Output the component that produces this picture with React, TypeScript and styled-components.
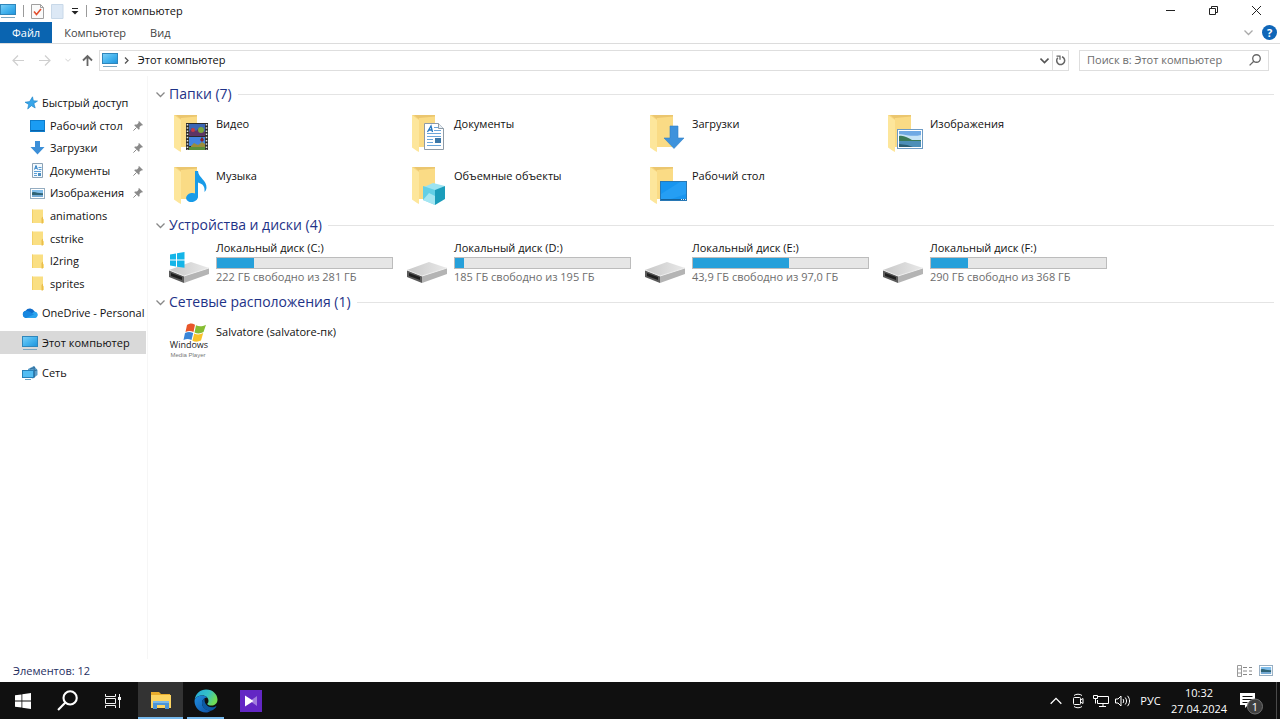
import React from "react";
import styled, { createGlobalStyle, css } from "styled-components";

const GlobalStyle = createGlobalStyle`
  *, *::before, *::after { box-sizing: border-box; }
  html, body { margin: 0; padding: 0; background: #fff; }
  body, button, input {
    font-family: "Open Sans", "Noto Sans", sans-serif;
    font-size: 11px;
    line-height: 16px;
    color: #111;
  }
  button { margin: 0; padding: 0; border: 0; background: none; cursor: default; }
  ul { margin: 0; padding: 0; list-style: none; }
  svg { display: block; flex: none; }
`;

const Shell = styled.div`
  display: flex;
  flex-direction: column;
  min-height: 100vh;
`;

/* ---------- title bar ---------- */

const TitleBar = styled.header`
  display: flex;
  align-items: center;
  height: 22px;
`;

const QuickTools = styled.div`
  display: flex;
  align-items: center;
  gap: 7px;
  padding-right: 8px;
`;

const Separator = styled.span`
  width: 1px;
  height: 12px;
  background: #9a9a9a;
`;

const IconButton = styled.button<{ $w?: number }>`
  display: flex;
  align-items: center;
  justify-content: center;
  width: ${(p) => (p.$w ? `${p.$w}px` : "auto")};
`;

const WindowTitle = styled.h1`
  flex: 1;
  margin: 0;
  font-size: 11px;
  font-weight: 400;
`;

const WindowControls = styled.div`
  display: flex;
  padding-right: 2px;
`;

/* ---------- ribbon ---------- */

const Ribbon = styled.nav`
  display: flex;
  align-items: stretch;
  height: 22px;
  border-bottom: 1px solid #dcdcdc;
`;

const Tab = styled.button<{ $primary?: boolean }>`
  padding: 0 12px;
  color: #444;
  ${(p) =>
    p.$primary &&
    css`
      color: #fff;
      background: #0a64b0;
    `}
`;

const RibbonTools = styled.div`
  display: flex;
  align-items: center;
  gap: 9px;
  margin-left: auto;
  padding-right: 3px;
`;

/* ---------- address row ---------- */

const AddressRow = styled.div`
  display: flex;
  align-items: center;
  height: 32px;
  padding: 0 11px 0 5px;
`;

const NavButtons = styled.div`
  display: flex;
  align-items: center;
  width: 94px;
`;

const AddressBox = styled.div`
  display: flex;
  flex: 1;
  align-items: center;
  height: 21px;
  margin-right: 10px;
  border: 1px solid #dedede;
`;

const Crumb = styled.button`
  display: flex;
  flex: 1;
  align-items: center;
  gap: 6px;
  padding-left: 2px;
  text-align: left;
`;

const RefreshButton = styled.button`
  display: flex;
  align-items: center;
  justify-content: center;
  width: 16px;
  height: 19px;
  border-left: 1px solid #dedede;
`;

const SearchBox = styled.label`
  display: flex;
  align-items: center;
  width: 190px;
  height: 21px;
  padding: 0 7px;
  border: 1px solid #dedede;

  input {
    flex: 1;
    min-width: 0;
    padding: 0;
    border: 0;
    outline: 0;
    background: none;
  }
  input::placeholder { color: #6c6c6c; opacity: 1; }
`;

/* ---------- body ---------- */

const Body = styled.div`
  display: flex;
  flex: 1;
`;

const Sidebar = styled.nav`
  width: 148px;
  padding: 16px 1px 0 0;
  border-right: 1px solid #f6f6f6;
`;

const QuickList = styled.ul`
  display: grid;
  grid-template-rows: repeat(9, minmax(0, 1fr));
  height: 203px;
  margin-bottom: 6px;
`;

const PlaceItem = styled.li`
  height: 23px;
  margin-bottom: 7px;
`;

const NavItem = styled.button<{ $nested?: boolean; $active?: boolean }>`
  display: grid;
  grid-template-columns: 16px 1fr 10px;
  gap: 4px;
  align-items: center;
  width: 100%;
  height: 100%;
  padding: 0 3px 0 ${(p) => (p.$nested ? 30 : 22)}px;
  text-align: left;
  white-space: nowrap;
  background: ${(p) => (p.$active ? "#d9d9d9" : "transparent")};
`;

const Content = styled.main`
  flex: 1;
  min-width: 0;
  padding: 8px 6px 0 8px;
`;

const Group = styled.section`
  margin-bottom: 4px;
`;

const GroupHeader = styled.h2`
  display: flex;
  align-items: center;
  gap: 4px;
  height: 20px;
  margin: 0;
  color: #1e3287;
  font-size: 14px;
  font-weight: 400;
  line-height: 20px;

  &::after {
    content: "";
    flex: 1;
    height: 1px;
    margin-left: 2px;
    background: #e4e4e4;
  }
`;

const Tiles = styled.ul`
  display: grid;
  grid-template-columns: repeat(auto-fill, 238px);
  padding: 3px 0 0 13px;
`;

const Tile = styled.button<{ $compact?: boolean }>`
  display: grid;
  grid-template-columns: 42px 177px;
  gap: 5px;
  align-items: start;
  width: 238px;
  height: ${(p) => (p.$compact ? 50 : 52)}px;
  padding-top: ${(p) => (p.$compact ? 1 : 5)}px;
  text-align: left;
`;

const TileName = styled.span`
  display: block;
  padding-top: 4px;
`;

const DriveInfo = styled.span`
  display: block;
`;

const DriveName = styled.span`
  display: block;
  line-height: 18px;
`;

const Capacity = styled.span`
  display: block;
  height: 12px;
  border: 1px solid #bcbcbc;
  background: #e6e6e6;
`;

const CapacityFill = styled.span`
  display: block;
  height: 100%;
  background: #26a0da;
`;

const DriveNote = styled.span`
  display: block;
  color: #6d6d6d;
`;

const StatusBar = styled.footer`
  display: flex;
  align-items: center;
  justify-content: space-between;
  height: 23px;
  padding: 0 7px 0 13px;
  color: #1f2f5f;
`;

const ViewModes = styled.div`
  display: flex;
  gap: 6px;
`;

/* ---------- taskbar ---------- */

const Taskbar = styled.div`
  display: flex;
  height: 37px;
  color: #fff;
  background: #101010;
`;

const TaskButton = styled.button<{ $active?: boolean; $running?: boolean }>`
  display: flex;
  align-items: center;
  justify-content: center;
  width: 45px;
  background: ${(p) => (p.$active ? "#333" : "transparent")};
  box-shadow: ${(p) => (p.$active ? "inset 0 -2px #76b9ed" : "none")};
  ${(p) =>
    p.$running &&
    css`
      background: linear-gradient(#76b9ed, #76b9ed) center bottom / 37px 2px no-repeat;
    `}
`;

const Apps = styled.div`
  display: flex;
  margin-left: 3px;
`;

const Tray = styled.div`
  display: flex;
  align-items: stretch;
  margin-left: auto;
  border-right: 1px solid #4a4a4a;
  margin-right: 3px;
`;

const TrayButton = styled.button<{ $w: number }>`
  display: flex;
  align-items: center;
  justify-content: center;
  width: ${(p) => p.$w}px;
  color: #fff;
`;

const Clock = styled.button`
  width: 64px;
  color: #fff;
  text-align: center;

  time { display: block; }
`;

/* ---------- icons ---------- */

const MonitorIcon = () => (
  <svg width="16" height="16" viewBox="0 0 16 16">
    <defs>
      <linearGradient id="mon" x1="0" y1="0" x2="1" y2="1">
        <stop offset="0" stopColor="#7fd0f7" />
        <stop offset=".5" stopColor="#45b4ee" />
        <stop offset="1" stopColor="#1d93dc" />
      </linearGradient>
    </defs>
    <rect x=".5" y="1.500" width="15" height="10" fill="url(#mon)" stroke="#2f86bb" />
    <path d="M1 14.500h14" stroke="#7ca6c0" fill="none" />
  </svg>
);

const CheckPageIcon = () => (
  <svg width="13" height="16" viewBox="0 0 13 16">
    <path d="M.5 1.500h9l3 3v11H.5z" fill="#fafafa" stroke="#a0a0a0" />
    <path d="M9.500 1.500v3h3" fill="none" stroke="#a0a0a0" />
    <path d="M3 8.500l2.500 3L10 6" fill="none" stroke="#e2502f" strokeWidth="1.600" />
  </svg>
);

const PageIcon = () => (
  <svg width="13" height="16" viewBox="0 0 13 16">
    <path d="M.5 1.500h11.500v14H.5z" fill="#dce8f5" stroke="#c8d8e8" />
  </svg>
);

const CustomizeIcon = () => (
  <svg width="8" height="8" viewBox="0 0 8 8">
    <path d="M1 1.500h6" stroke="#222" />
    <path d="M.5 4h7L4 7.500z" fill="#222" />
  </svg>
);

const Chevron = ({ color = "#777", size = 9, up = false, width = 1.3 }: { color?: string; size?: number; up?: boolean; width?: number }) => (
  <svg width={size} height={size} viewBox="0 0 9 9">
    <path d={up ? "M.5 6.500l4-4 4 4" : "M.5 2.500l4 4 4-4"} fill="none" stroke={color} strokeWidth={width} />
  </svg>
);

const ArrowIcon = ({ dir, color }: { dir: "left" | "right" | "up"; color: string }) => {
  const paths = {
    left: "M12 6.500H1M6 1.500l-5 5 5 5",
    right: "M0 6.500h11M6 1.500l5 5-5 5",
    up: "M6.500 12V2M2 6.500L6.500 2 11 6.500",
  };
  return (
    <svg width="13" height="13" viewBox="0 0 13 13">
      <path d={paths[dir]} fill="none" stroke={color} strokeWidth={dir === "up" ? 1.8 : 1.2} />
    </svg>
  );
};

const StarIcon = () => (
  <svg width="16" height="14" viewBox="-2 0 16 14">
    <path d="M8.500.8l.9 4 4.100.2-3.600 2.600 1.300 4.400-3.800-2.300L3.700 13l1-4.600L1 6.200l4.600-.6z" fill="#38a6ea" stroke="#1a7fc4" strokeWidth=".6" />
  </svg>
);

const DesktopIcon = () => (
  <svg width="16" height="14" viewBox="0 0 16 14">
    <rect x=".5" y="1.500" width="14" height="11" fill="#1a9cf3" stroke="#0d7ccb" />
    <path d="M1 11.500h13" stroke="#0a62a8" />
  </svg>
);

const DownIcon = () => (
  <svg width="15" height="14" viewBox="0 0 15 14">
    <path d="M5 0h5v6h4.500L7.500 13.500.5 6H5z" fill="#3c8fd8" />
  </svg>
);

const DocIcon = () => (
  <svg width="15" height="16" viewBox="0 0 15 16">
    <path d="M2.500.5h10v14h-10z" fill="#f3f9fd" stroke="#8ba2b5" />
    <path d="M4.500 6.500l1.500-4 1.500 4M5 5.200h2" fill="none" stroke="#2b7ec4" />
    <path d="M8.500 4.500h3M8.500 6.500h3M4 8.500h7M4 10.500h3M4 12.500h3" stroke="#5a9fd6" fill="none" />
    <rect x="8" y="10" width="3" height="3" fill="#4b8ec2" />
  </svg>
);

const PictureIcon = ({ w = 15, h = 11 }: { w?: number; h?: number }) => (
  <svg width={w} height={h} viewBox="0 0 15 11" preserveAspectRatio="none">
    <rect x=".5" y=".5" width="14" height="10" fill="#fff" stroke="#95adc1" />
    <rect x="2" y="2" width="11" height="4" fill="#7fbdea" />
    <path d="M2 4.500c3-1.500 5 1 11 .8v2H2z" fill="#2f6375" />
    <rect x="2" y="7" width="11" height="2" fill="#74a9d3" />
  </svg>
);

const SmallFolderIcon = () => (
  <svg width="15" height="15" viewBox="0 0 15 15">
    <path d="M2 .5h11v9l1 1v3.500H2z" fill="#fadf83" />
    <path d="M11.500 9l1.500-1.500v7H11.500z" fill="#e9bd4c" />
    <path d="M2 .5h1v13.500H2z" fill="#f3d068" />
  </svg>
);

const PinIcon = () => (
  <svg width="10" height="10" viewBox="0 0 10 10">
    <path d="M6 0l4 4-1 .6-.8-.2L6.500 6l.1 2-.8.8L1.200 4.200 2 3.400l2 .1L5.600 1.800 5.400.8z" fill="#8a8a8a" />
    <path d="M3.500 6.500L.4 9.600" stroke="#8a8a8a" />
  </svg>
);

const CloudIcon = () => (
  <svg width="16" height="12" viewBox="0 0 16 12">
    <path d="M4 11a3.700 3.700 0 01-.4-7.200A5 5 0 0112.500 4.600 3.300 3.300 0 0112.700 11z" fill="#0f6cc9" />
    <path d="M3.500 11l8.500-6.200a3.200 3.200 0 013.700 3.800A3 3 0 0112.700 11z" fill="#2ba4ee" />
    <path d="M3.600 3.900c2-.3 3.600.4 8.400 3.700L4 11a3.600 3.600 0 01-.4-7.100z" fill="#1787df" />
  </svg>
);

const NetworkIcon = () => (
  <svg width="16" height="16" viewBox="0 0 16 16">
    <path d="M6 4l6-3 3.500 4v5L11 13.500 6 12z" fill="#5b9dc9" />
    <path d="M8 4l5-1.500M8 7l7-2M12 1.500l.5 11" stroke="#2f6f9d" fill="none" />
    <rect x=".5" y="5.500" width="11" height="7" fill="#52bdf3" stroke="#2680b8" />
    <path d="M3 14.500h6" stroke="#6aa2c4" />
  </svg>
);

type FolderKind = "video" | "docs" | "down" | "pics" | "music" | "cube" | "desk";

const overlays: Record<FolderKind, React.ReactNode> = {
  video: (
    <g>
      <rect x="16" y="9" width="22" height="27" fill="#2b2b2b" />
      <rect x="19" y="10" width="16" height="12" fill="#3c66b5" />
      <rect x="19" y="23" width="16" height="9" fill="#4384e0" />
      <rect x="19" y="33" width="16" height="3" fill="#5a8f3c" />
      <path d="M19 18l3-4 4 3 4-4 5 5v4H19z" fill="#5d3565" />
      <circle cx="31" cy="16" r="3" fill="#7aa53c" />
      <circle cx="23" cy="16" r="2" fill="#c23b45" />
      <path d="M32 23l2 3-2 2-2-2z" fill="#8a1f2b" />
      <path d="M21 32l3-3 4 2 4-3 3 2v3H21z" fill="#9a8d3b" />
      <path d="M17.500 10v26M36.500 10v26" stroke="#e5e5e5" strokeWidth="1.500" strokeDasharray="1.500 1.700" />
    </g>
  ),
  docs: (
    <g>
      <path d="M16.500 9.500h14l5 5v21h-19z" fill="#fff" stroke="#8d9aa6" />
      <path d="M30.500 9.500v5h5" fill="#e8eef4" stroke="#8d9aa6" />
      <path d="M19.500 18l3.500-6 1.500 6M20.500 16h3.500" fill="none" stroke="#2277c2" strokeWidth="1.300" />
      <path d="M26 13.500h4M26 16.500h7M19 19.500h14M19 22.500h14M19 25.500h6M19 28.500h6M19 31.500h14" stroke="#6aa6da" />
      <rect x="27" y="24" width="6" height="5" fill="#3c78a8" />
    </g>
  ),
  down: <path d="M24 12h8v12h6L28 34.500 18 24h6z" fill="#3e92dc" stroke="#2f7fc6" strokeWidth=".6" />,
  pics: (
    <g>
      <rect x="13.500" y="15.500" width="25" height="19" fill="#fff" stroke="#6d9bc4" />
      <rect x="15" y="17" width="22" height="16" fill="#6fa9e4" />
      <path d="M15 20c8 1 14 3 22 1v5H15z" fill="#c5e3f6" />
      <path d="M15 22c5-1 9 2 13 4h9v1.500H15z" fill="#3a7a58" />
      <rect x="15" y="27" width="22" height="6" fill="#4d8fb8" />
      <path d="M15 33v-3l8 1 6 2z" fill="#2c5f74" />
    </g>
  ),
  music: (
    <g fill="#189be8">
      <ellipse cx="22" cy="31.500" rx="6" ry="4.500" transform="rotate(-12 22 31.500)" />
      <path d="M25 5h3c.5 7 9 9 8.500 17-.3 2-1 3-2 4 .5-5-1-8-6.500-9.500v15h-3z" />
    </g>
  ),
  cube: (
    <g>
      <path d="M25 17l12 3-10 5-11-4z" fill="#9be3f2" />
      <path d="M15 20l12 4v15l-12-5z" fill="#62cfe6" />
      <path d="M27 24l10-4v13l-10 6z" fill="#1b9dbb" />
      <path d="M15 34l6-7 6 3v9z" fill="#c0eff7" opacity=".7" />
    </g>
  ),
  desk: (
    <g>
      <rect x="14.500" y="15.500" width="26" height="19" fill="#1795f0" stroke="#2878b5" />
      <path d="M15 28L34 16h6v12l-18 6h-7z" fill="#34a8f8" opacity=".5" />
      <path d="M15 33.500h25" stroke="#15639e" />
      <path d="M35 33.500h5" stroke="#d9ecfa" strokeDasharray="1 1" />
    </g>
  ),
};

const FolderIcon = ({ kind }: { kind: FolderKind }) => (
  <svg width="42" height="44" viewBox="-1 -2 42 44">
    <path d="M4 1h23v32H8z" fill="#f6d47d" />
    <path d="M6 1h21v3L11 5z" fill="#ebc66f" />
    <path d="M11 4l16-1.500V33H11z" fill="#fadb85" />
    <path d="M4 1l7 5v32L9 37 4 33.500z" fill="#fde69b" />
    {overlays[kind]}
  </svg>
);

const DriveIcon = ({ system }: { system?: boolean }) => (
  <svg width="42" height="47" viewBox="0 -7 42 47">
    <defs>
      <linearGradient id="driveTop" x1="0" y1="0" x2="1" y2="0">
        <stop offset="0" stopColor="#c8c8c8" />
        <stop offset="1" stopColor="#e9e9e9" />
      </linearGradient>
    </defs>
    <path d="M0 24l22-8 18 6-25 9z" fill="url(#driveTop)" />
    <path d="M0 24l15 6v7L0 31z" fill="#5a5a5a" />
    <path d="M2 27l11 4v3L2 30z" fill="#1f1f1f" />
    <path d="M15 30l25-8v6l-25 9z" fill="#b4b4b4" />
    <path d="M0 24l15 6 25-8" fill="none" stroke="#efefef" />
    {system && (
      <path d="M1 8.500l6-1v6H1zM8 7.300l7.500-1.200v7.400H8zM1 14.500h6v6l-6-1zM8 14.500h7.500v7.300L8 20.700z" fill="#14b5e8" />
    )}
  </svg>
);

const MediaPlayerIcon = () => (
  <svg width="42" height="40" viewBox="0 0 42 40">
    <path d="M18 5c3-2 5-2 8-.2L24.500 12c-3-1.500-5-1.500-8 0z" fill="#e8562a" />
    <path d="M27 5.200c3 1.600 6 1.600 10-.5L34.500 12c-3 1.800-6 1.800-9 .5z" fill="#86bd32" />
    <path d="M16 13c3-1.500 5-1.500 8.200 0l-1.700 7c-3-1.500-5-1.500-8 0z" fill="#3b86d8" />
    <path d="M25.200 13.500c3 1.400 6 1.300 9-.4L32 20.500c-3 1.500-6 1.500-8.600.2z" fill="#f8c22a" />
    <text x="20" y="28" textAnchor="middle" fontFamily="Open Sans, sans-serif" fontSize="9" fill="#222">Windows</text>
    <text x="19" y="37" textAnchor="middle" fontFamily="Liberation Sans, sans-serif" fontSize="6" fill="#777">Media Player</text>
  </svg>
);

const SearchIcon = ({ size, color, width }: { size: number; color: string; width: number }) => (
  <svg width={size} height={size} viewBox="0 0 20 20">
    <circle cx="12.500" cy="7.500" r="6.300" fill="none" stroke={color} strokeWidth={width} />
    <path d="M8 12l-7 7" stroke={color} strokeWidth={width} />
  </svg>
);

const StartIcon = () => (
  <svg width="16" height="16" viewBox="0 0 16 16">
    <path d="M0 2.300l6.500-.9v6.200H0zM7.300 1.300L16 0v7.600H7.300zM0 8.400h6.500v6.200L0 13.700zM7.300 8.400H16V16l-8.700-1.200z" fill="#fff" />
  </svg>
);

const TaskViewIcon = () => (
  <svg width="16" height="16" viewBox="0 0 16 16">
    <path d="M.5 1v2.500h10V1M.5 15v-2.500h10V15M.5 5.500h10v5H.5z" fill="none" stroke="#f2f2f2" />
    <path d="M14.500 1v14" stroke="#f2f2f2" />
    <rect x="13" y="4" width="3" height="3" fill="#f2f2f2" />
  </svg>
);

const ExplorerIcon = () => (
  <svg width="22" height="20" viewBox="0 0 22 20">
    <path d="M1 1h8l2 2h9v14H1z" fill="#e9ac2c" />
    <path d="M1 4h20v13H1z" fill="#fcd462" />
    <path d="M3 10h16v8h-4v-4H7v4H3z" fill="#4b94d6" />
    <path d="M3 10h16v2H3z" fill="#7ab9e9" />
  </svg>
);

const EdgeIcon = () => (
  <svg width="24" height="24" viewBox="0 0 24 24">
    <defs>
      <linearGradient id="edgeTop" x1="0" y1="0" x2="1" y2=".4">
        <stop offset="0" stopColor="#23a8dc" />
        <stop offset=".6" stopColor="#35c1c6" />
        <stop offset="1" stopColor="#6fdc55" />
      </linearGradient>
      <linearGradient id="edgeLow" x1="0" y1="0" x2="1" y2="1">
        <stop offset="0" stopColor="#1f8ee0" />
        <stop offset="1" stopColor="#0f4fa3" />
      </linearGradient>
    </defs>
    <path d="M.6 11C1.500 4.500 6.500.5 12 .5c7 0 11.500 5 11.500 10 0 4-3 6-6 6-2.500 0-4.200-.8-4.200-1.600 0-.6 1.200-1.200 1.200-3C14.500 9 12 6.500 8.500 6.500 4.500 6.500 1.500 8.500.6 11z" fill="url(#edgeTop)" />
    <path d="M.5 12c0-3 3.500-5.500 8-5.500 2 0 3.700.8 4.700 2C9.500 9 8 11.500 8 14c0 5 5 8 9.500 7.200C15.500 23 13.500 23.500 12 23.500 5 23.500.5 18 .5 12z" fill="url(#edgeLow)" />
    <path d="M8 14c0-2 .8-3.800 2.600-4.800-.6 4.300 1.900 9 7.400 9 1.700 0 3-.5 4-1 .4-.2.700.1.500.4-1 1.800-2.700 3.200-4.600 3.800C12.500 22.300 8 19 8 14z" fill="#0c59a4" />
  </svg>
);

const PlayerIcon = () => (
  <svg width="22" height="22" viewBox="0 0 22 22">
    <rect width="22" height="22" fill="#6327c4" />
    <path d="M17 6v10l-7-5z" fill="#b79be6" opacity=".75" />
    <path d="M5 5.500L13.500 11 5 16.500z" fill="#fff" />
  </svg>
);

const RecordIcon = () => (
  <svg width="12" height="16" viewBox="0 0 12 16">
    <path d="M2 2.500C4 .8 8 .8 10 2.500M2 13.500c2 1.700 6 1.700 8 0" fill="none" stroke="#fff" />
    <rect x="1.500" y="4.500" width="7" height="7" rx="1" fill="none" stroke="#fff" />
    <path d="M8.500 7l2.500-1.500v5L8.500 9" fill="none" stroke="#fff" />
  </svg>
);

const EthernetIcon = () => (
  <svg width="16" height="14" viewBox="0 0 16 14">
    <path d="M5 2.500h10.500v7H4.500V6M10 9.500v3M6 12.500h7" fill="none" stroke="#fff" />
    <path d="M.5 1.500h4v3h-4zM2.500 4.500v5" fill="none" stroke="#fff" />
  </svg>
);

const SpeakerIcon = () => (
  <svg width="16" height="14" viewBox="0 0 16 14">
    <path d="M.5 5h2.500l3-3v10L3 9H.5z" fill="none" stroke="#fff" />
    <path d="M8 5c.9 1.200.9 2.800 0 4M10.200 3.500c1.800 2 1.800 5 0 7M12.500 1.800c2.700 3 2.700 7.400 0 10.400" fill="none" stroke="#fff" />
  </svg>
);

const NoticeIcon = () => (
  <svg width="30" height="28" viewBox="0 0 30 28">
    <path d="M1 6h15v12H9l-3 3v-3H1z" fill="#fff" />
    <path d="M3.500 9.500h10M3.500 12.500h10M3.500 15.500h5" stroke="#101010" />
    <circle cx="16" cy="19.500" r="7.500" fill="#3f3f3f" stroke="#707070" />
    <text x="16" y="23.500" textAnchor="middle" fontFamily="Open Sans, sans-serif" fontSize="11" fill="#fff">1</text>
  </svg>
);

/* ---------- data ---------- */

const quickAccess: { name: string; icon: React.ReactNode; pinned?: boolean }[] = [
  { name: "Рабочий стол", icon: <DesktopIcon />, pinned: true },
  { name: "Загрузки", icon: <DownIcon />, pinned: true },
  { name: "Документы", icon: <DocIcon />, pinned: true },
  { name: "Изображения", icon: <PictureIcon />, pinned: true },
  { name: "animations", icon: <SmallFolderIcon /> },
  { name: "cstrike", icon: <SmallFolderIcon /> },
  { name: "l2ring", icon: <SmallFolderIcon /> },
  { name: "sprites", icon: <SmallFolderIcon /> },
];

const places = [
  { name: "OneDrive - Personal", icon: <CloudIcon /> },
  { name: "Этот компьютер", icon: <MonitorIcon />, active: true },
  { name: "Сеть", icon: <NetworkIcon /> },
];

const folders: { name: string; kind: FolderKind }[] = [
  { name: "Видео", kind: "video" },
  { name: "Документы", kind: "docs" },
  { name: "Загрузки", kind: "down" },
  { name: "Изображения", kind: "pics" },
  { name: "Музыка", kind: "music" },
  { name: "Объемные объекты", kind: "cube" },
  { name: "Рабочий стол", kind: "desk" },
];

const drives = [
  { letter: "C", free: "222", total: "281", used: 21, system: true },
  { letter: "D", free: "185", total: "195", used: 5 },
  { letter: "E", free: "43,9", total: "97,0", used: 55 },
  { letter: "F", free: "290", total: "368", used: 21 },
];

export default function App() {
  return (
    <>
      <GlobalStyle />
      <Shell>
        <TitleBar>
          <QuickTools>
            <MonitorIcon />
            <Separator />
            <IconButton aria-label="Свойства"><CheckPageIcon /></IconButton>
            <IconButton aria-label="Новая папка"><PageIcon /></IconButton>
            <IconButton aria-label="Настройка панели"><CustomizeIcon /></IconButton>
            <Separator />
          </QuickTools>
          <WindowTitle>Этот компьютер</WindowTitle>
          <WindowControls>
            <IconButton $w={43} aria-label="Свернуть">
              <svg width="11" height="11" viewBox="0 0 11 11"><path d="M1 4.500h9" stroke="#222" /></svg>
            </IconButton>
            <IconButton $w={43} aria-label="Восстановить">
              <svg width="11" height="13" viewBox="0 0 11 13">
                <path d="M1.500 3.500h6v6h-6zM3.500 3V1.500h6v6H8" fill="none" stroke="#222" />
              </svg>
            </IconButton>
            <IconButton $w={43} aria-label="Закрыть">
              <svg width="11" height="13" viewBox="0 0 11 13"><path d="M1 1l9 9M10 1l-9 9" stroke="#222" /></svg>
            </IconButton>
          </WindowControls>
        </TitleBar>

        <Ribbon>
          <Tab $primary>Файл</Tab>
          <Tab>Компьютер</Tab>
          <Tab>Вид</Tab>
          <RibbonTools>
            <IconButton aria-label="Развернуть ленту"><Chevron color="#aaa" /></IconButton>
            <IconButton aria-label="Справка">
              <svg width="15" height="15" viewBox="0 0 15 15">
                <circle cx="7.500" cy="7.500" r="7.500" fill="#0f66b8" />
                <text x="7.500" y="11.500" textAnchor="middle" fontFamily="Open Sans, sans-serif" fontSize="11" fontWeight="700" fill="#fff">?</text>
              </svg>
            </IconButton>
          </RibbonTools>
        </Ribbon>

        <AddressRow>
          <NavButtons>
            <IconButton $w={26} aria-label="Назад"><ArrowIcon dir="left" color="#cfcfcf" /></IconButton>
            <IconButton $w={28} aria-label="Вперед"><ArrowIcon dir="right" color="#cfcfcf" /></IconButton>
            <IconButton $w={18} aria-label="Последние расположения"><Chevron color="#ccc" size={6} /></IconButton>
            <IconButton $w={20} aria-label="Вверх"><ArrowIcon dir="up" color="#666" /></IconButton>
          </NavButtons>
          <AddressBox>
            <Crumb>
              <MonitorIcon />
              <svg width="5" height="7" viewBox="0 0 5 7"><path d="M1 .5l3 3-3 3" fill="none" stroke="#555" strokeWidth="1.300" /></svg>
              <span>&nbsp;Этот компьютер</span>
            </Crumb>
            <IconButton $w={16} aria-label="История адресов"><Chevron color="#555" width={1.6} /></IconButton>
            <RefreshButton aria-label="Обновить">
              <svg width="11" height="11" viewBox="0 0 11 11">
                <path d="M7 1.800A4 4 0 112.800 2.800" fill="none" stroke="#666" strokeWidth="1.500" />
                <path d="M1.500 1.200h3.500v3.500" fill="none" stroke="#666" strokeWidth="1.300" />
              </svg>
            </RefreshButton>
          </AddressBox>
          <SearchBox>
            <input type="text" placeholder="Поиск в: Этот компьютер" aria-label="Поиск" />
            <SearchIcon size={12} color="#666" width={2.2} />
          </SearchBox>
        </AddressRow>

        <Body>
          <Sidebar>
            <QuickList>
              <li><NavItem><StarIcon /><span>Быстрый доступ</span></NavItem></li>
              {quickAccess.map((q) => (
                <li key={q.name}>
                  <NavItem $nested>
                    {q.icon}
                    <span>{q.name}</span>
                    {q.pinned && <PinIcon />}
                  </NavItem>
                </li>
              ))}
            </QuickList>
            <ul>
              {places.map((p) => (
                <PlaceItem key={p.name}>
                  <NavItem $active={p.active}>{p.icon}<span>{p.name}</span></NavItem>
                </PlaceItem>
              ))}
            </ul>
          </Sidebar>

          <Content>
            <Group>
              <GroupHeader><Chevron color="#888" />Папки (7)</GroupHeader>
              <Tiles>
                {folders.map((f) => (
                  <li key={f.name}>
                    <Tile><FolderIcon kind={f.kind} /><TileName>{f.name}</TileName></Tile>
                  </li>
                ))}
              </Tiles>
            </Group>
            <Group>
              <GroupHeader><Chevron color="#888" />Устройства и диски (4)</GroupHeader>
              <Tiles>
                {drives.map((d) => (
                  <li key={d.letter}>
                    <Tile $compact>
                      <DriveIcon system={d.system} />
                      <DriveInfo>
                        <DriveName>Локальный диск ({d.letter}:)</DriveName>
                        <Capacity><CapacityFill style={{ width: `${d.used}%` }} /></Capacity>
                        <DriveNote>{d.free} ГБ свободно из {d.total} ГБ</DriveNote>
                      </DriveInfo>
                    </Tile>
                  </li>
                ))}
              </Tiles>
            </Group>
            <Group>
              <GroupHeader><Chevron color="#888" />Сетевые расположения (1)</GroupHeader>
              <Tiles>
                <li><Tile><MediaPlayerIcon /><TileName>Salvatore (salvatore-пк)</TileName></Tile></li>
              </Tiles>
            </Group>
          </Content>
        </Body>

        <StatusBar>
          <span>Элементов: 12</span>
          <ViewModes>
            <IconButton aria-label="Таблица">
              <svg width="16" height="12" viewBox="0 0 16 12">
                <path d="M.5.500h4v11h-4zM.5 4h4M.5 8h4" fill="none" stroke="#999" />
                <path d="M6 2.500h4M6 6h4M6 9.500h4M12 2.500h3M12 6h3M12 9.500h3" stroke="#888" />
              </svg>
            </IconButton>
            <IconButton aria-label="Крупные значки"><PictureIcon w={14} h={11} /></IconButton>
          </ViewModes>
        </StatusBar>

        <Taskbar>
          <TaskButton aria-label="Пуск"><StartIcon /></TaskButton>
          <TaskButton aria-label="Поиск"><SearchIcon size={21} color="#fff" width={2} /></TaskButton>
          <TaskButton aria-label="Представление задач"><TaskViewIcon /></TaskButton>
          <Apps>
            <TaskButton $active aria-label="Проводник"><ExplorerIcon /></TaskButton>
            <TaskButton $running aria-label="Edge"><EdgeIcon /></TaskButton>
            <TaskButton aria-label="Плеер"><PlayerIcon /></TaskButton>
          </Apps>
          <Tray>
            <TrayButton $w={23} aria-label="Скрытые значки"><Chevron color="#fff" size={12} up width={1} /></TrayButton>
            <TrayButton $w={22} aria-label="Запись"><RecordIcon /></TrayButton>
            <TrayButton $w={23} aria-label="Сеть"><EthernetIcon /></TrayButton>
            <TrayButton $w={22} aria-label="Громкость"><SpeakerIcon /></TrayButton>
            <TrayButton $w={33}>РУС</TrayButton>
            <Clock><time>10:32</time><time>27.04.2024</time></Clock>
            <TrayButton $w={45} aria-label="Уведомления"><NoticeIcon /></TrayButton>
          </Tray>
        </Taskbar>
      </Shell>
    </>
  );
}
